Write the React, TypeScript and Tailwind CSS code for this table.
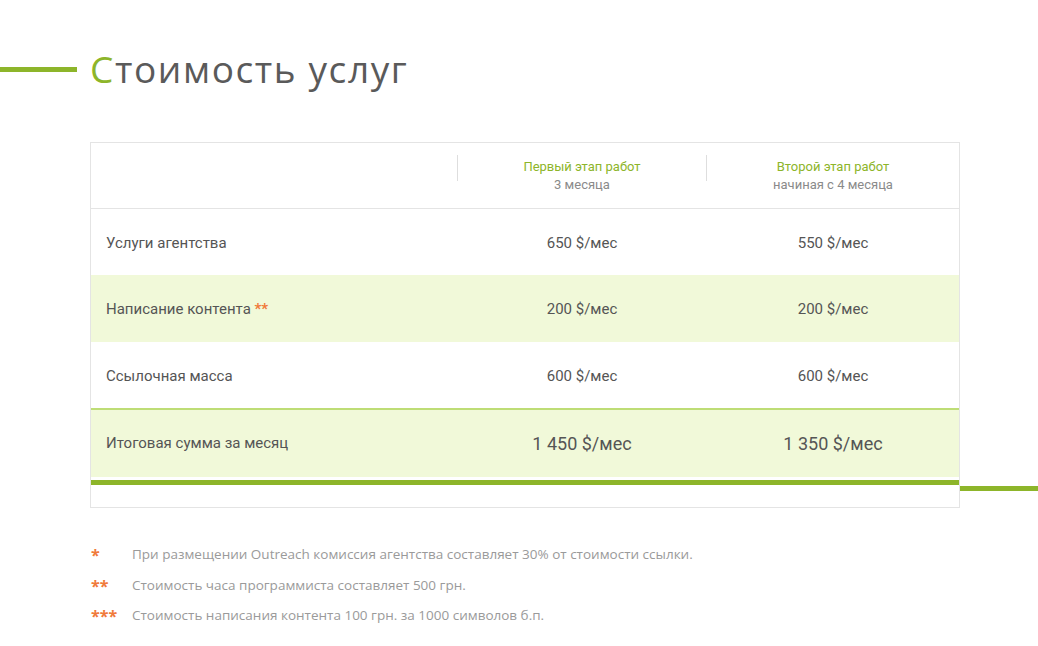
import React from "react";

const rows = [
  { label: "Услуги агентства", a: "650 $/мес", b: "550 $/мес", green: false, star: false, h: "h-[66px]" },
  { label: "Написание контента", a: "200 $/мес", b: "200 $/мес", green: true, star: true, h: "h-[67px]" },
  { label: "Ссылочная масса", a: "600 $/мес", b: "600 $/мес", green: false, star: false, h: "h-[66px]" },
];

export default function App() {
  return (
    <div className="w-[1038px] h-[646px] bg-white overflow-hidden">
      {/* Title */}
      <div className="flex items-start pt-[45px]">
        <div className="w-[77px] h-[5px] bg-[#8db52a] mt-[22px]" />
        <h1
          className="ml-[13px] text-[37px] leading-[48px] text-[#5a5a5a] tracking-[1.6px]"
          style={{ fontFamily: '"Open Sans", "Noto Sans", sans-serif' }}
        >
          <span className="text-[#8db52a]">С</span>тоимость услуг
        </h1>
      </div>

      {/* Table */}
      <div className="flex items-start mt-[49px] pl-[90px]">
        <div
          className="w-[870px] border border-[#e4e4e4] text-[#555]"
          style={{ fontFamily: "Roboto, 'Liberation Sans', sans-serif" }}
        >
          {/* header */}
          <div className="flex h-[66px] border-b border-[#e4e4e4]">
            <div className="w-[366px]" />
            <div className="w-[249px] flex">
              <div className="w-px h-[26px] bg-[#dedede] mt-[12px]" />
              <div className="flex-1 flex flex-col items-center pt-[15px] text-[13px] leading-[18px]">
                <div className="text-[#8db52a]">Первый этап работ</div>
                <div className="text-[#8a8a8a]">3 месяца</div>
              </div>
            </div>
            <div className="flex-1 flex">
              <div className="w-px h-[26px] bg-[#dedede] mt-[12px]" />
              <div className="flex-1 flex flex-col items-center pt-[15px] text-[13px] leading-[18px]">
                <div className="text-[#8db52a]">Второй этап работ</div>
                <div className="text-[#8a8a8a]">начиная с 4 месяца</div>
              </div>
            </div>
          </div>

          {rows.map((r) => (
            <div key={r.label} className={`flex items-center pt-[2px] ${r.h} ${r.green ? "bg-[#f1f9d9]" : "bg-white"} text-[15px]`}>
              <div className="w-[366px] pl-[15px]">
                {r.label}
                {r.star && <span className="text-[#f07a3a] font-bold"> **</span>}
              </div>
              <div className="w-[249px] text-center pl-px">{r.a}</div>
              <div className="flex-1 text-center pl-px">{r.b}</div>
            </div>
          ))}

          <div className="h-[2px] bg-[#bedd76]" />
          <div className="flex items-center h-[67px] bg-[#f1f9d9]">
            <div className="w-[366px] pl-[15px] text-[15px]">Итоговая сумма за месяц</div>
            <div className="w-[249px] text-center pl-px text-[18px]">1 450 $/мес</div>
            <div className="flex-1 text-center pl-px text-[18px]">1 350 $/мес</div>
          </div>
          <div className="h-[3px]" />
          <div className="h-[5px] bg-[#8db52a]" />
          <div className="h-[22px]" />
        </div>
        <div className="flex-1 h-[5px] bg-[#8db52a] mt-[344px]" />
      </div>

      {/* Footnotes */}
      <div
        className="mt-[37px] pl-[91px] flex flex-col gap-[10.5px] text-[13.5px] leading-[18px] text-[#9a9a9a]"
        style={{ fontFamily: '"Open Sans", "Noto Sans", sans-serif' }}
      >
        <div className="flex items-start">
          <span className="w-[41px] text-[#f07a3a] font-bold text-[16px] leading-[20px]">*</span>
          <span>При размещении Outreach комиссия агентства составляет 30% от стоимости ссылки.</span>
        </div>
        <div className="flex items-start">
          <span className="w-[41px] text-[#f07a3a] font-bold text-[16px] leading-[20px]">**</span>
          <span>Стоимость часа программиста составляет 500 грн.</span>
        </div>
        <div className="flex items-start">
          <span className="w-[41px] text-[#f07a3a] font-bold text-[16px] leading-[20px]">***</span>
          <span>Стоимость написания контента 100 грн. за 1000 символов б.п.</span>
        </div>
      </div>
    </div>
  );
}
